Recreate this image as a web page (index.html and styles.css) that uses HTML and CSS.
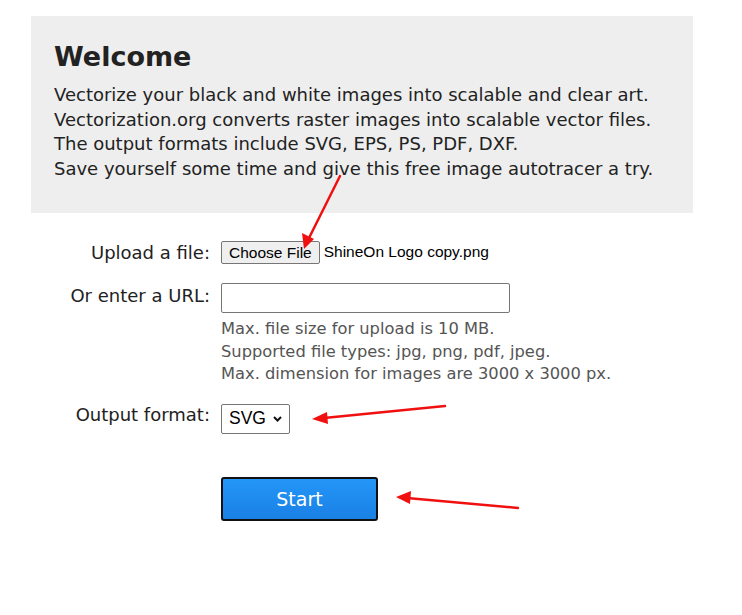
FILE: index.html
```html
<!DOCTYPE html>
<html>
<head>
<meta charset="utf-8">
<link rel="stylesheet" href="styles.css">
</head>
<body>
<div class="page">
  <section class="welcome">
    <h1>Welcome</h1>
    <p>Vectorize your black and white images into scalable and clear art.<br>
    Vectorization.org converts raster images into scalable vector files.<br>
    The output formats include SVG, EPS, PS, PDF, DXF.<br>
    Save yourself some time and give this free image autotracer a try.</p>
  </section>

  <form class="form">
    <label class="lbl lbl-file">Upload a file:</label>
    <div class="ctrl file-row">
      <span class="file-btn">Choose File</span>
      <span class="file-name">ShineOn Logo copy.png</span>
    </div>

    <label class="lbl lbl-url">Or enter a URL:</label>
    <div class="ctrl">
      <span class="url-input"></span>
      <div class="help">
        Max. file size for upload is 10 MB.<br>
        Supported file types: jpg, png, pdf, jpeg.<br>
        Max. dimension for images are 3000 x 3000 px.
      </div>
    </div>

    <label class="lbl lbl-out">Output format:</label>
    <div class="ctrl">
      <span class="select">SVG
        <svg class="chev" width="9" height="6" viewBox="0 0 9 6"><path d="M1 1 L4.5 4.5 L8 1" fill="none" stroke="#111" stroke-width="2"/></svg>
      </span>
    </div>

    <div></div>
    <div class="ctrl">
      <span class="start">Start</span>
    </div>
  </form>

  <svg class="arrows" width="742" height="615" viewBox="0 0 742 615">
    <g stroke="#f01010" stroke-width="2.5" fill="none" stroke-linecap="round">
      <line x1="340" y1="176" x2="309" y2="238"/>
      <line x1="445" y1="406" x2="324" y2="418"/>
      <line x1="518" y1="508" x2="407" y2="498"/>
    </g>
    <g fill="#f01010">
      <polygon points="304,249 302,233 314,239"/>
      <polygon points="312,419 327,412 328,424"/>
      <polygon points="396,497 411,491 410,504"/>
    </g>
  </svg>
</div>
</body>
</html>
```

FILE: styles.css
```css
html, body {
  margin: 0;
  padding: 0;
  background: #ffffff;
}

.page {
  position: relative;
  width: 742px;
  height: 615px;
  box-sizing: border-box;
  padding-top: 16px;
  font-family: "DejaVu Sans", Verdana, sans-serif;
  color: #222222;
}

.welcome {
  margin-left: 31px;
  width: 662px;
  height: 197px;
  box-sizing: border-box;
  background: #eeeeee;
  padding: 25px 23px 30px 23px;
}

.welcome h1 {
  margin: 0 0 11px 0;
  font-size: 27px;
  line-height: 31px;
  font-weight: bold;
  color: #222222;
}

.welcome p {
  margin: 0;
  font-size: 18px;
  line-height: 24.6px;
  color: #222222;
}

.form {
  display: grid;
  grid-template-columns: 179px 1fr;
  column-gap: 11px;
  margin: 27px 0 0 31px;
}

.lbl {
  text-align: right;
  color: #222222;
  font-size: 18px;
  line-height: 24px;
}

.lbl-file { padding-top: 1px; }
.lbl-url { padding-top: 19px; }
.lbl-out { padding-top: 17px; }

.ctrl {
  display: flex;
  flex-direction: column;
  align-items: flex-start;
}

.file-row {
  flex-direction: row;
  align-items: center;
  height: 24px;
}

.file-btn {
  font-family: "Liberation Sans", Arial, sans-serif;
  font-size: 15.5px;
  line-height: 21px;
  color: #000000;
  background: #efefef;
  border: 1px solid #767676;
  border-radius: 2px;
  padding: 0 7px;
}

.file-name {
  font-family: "Liberation Sans", Arial, sans-serif;
  font-size: 15.5px;
  color: #000000;
  margin-left: 4px;
}

.url-input {
  display: block;
  margin-top: 18px;
  width: 289px;
  height: 30px;
  box-sizing: border-box;
  border: 1px solid #767676;
  border-radius: 2px;
  background: #ffffff;
}

.help {
  margin-top: 5px;
  font-size: 16.3px;
  line-height: 22.5px;
  color: #555555;
}

.select {
  margin-top: 18px;
  display: flex;
  align-items: center;
  gap: 7px;
  width: 69px;
  height: 30px;
  box-sizing: border-box;
  padding: 0 7px 0 7px;
  border: 1px solid #767676;
  border-radius: 2px;
  font-family: "Liberation Sans", Arial, sans-serif;
  font-size: 17.5px;
  color: #000000;
  background: #ffffff;
}

.start {
  margin-top: 43px;
  display: flex;
  align-items: center;
  justify-content: center;
  width: 157px;
  height: 44px;
  box-sizing: border-box;
  border: 2px solid #111111;
  border-radius: 3px;
  background: linear-gradient(#2496f8, #1a80e4);
  color: #ffffff;
  font-size: 19px;
}

.arrows {
  position: absolute;
  left: 0;
  top: 0;
  pointer-events: none;
}
```
